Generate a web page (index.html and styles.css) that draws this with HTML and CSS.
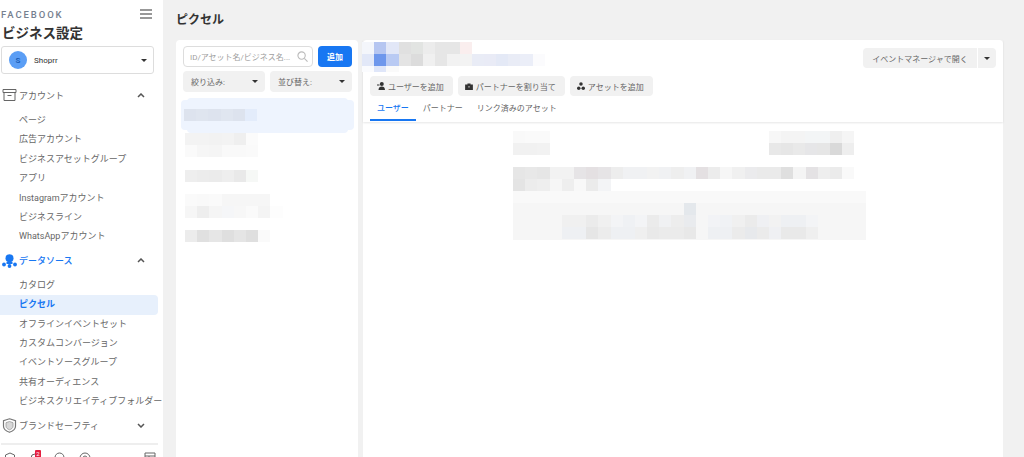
FILE: index.html
```html
<!DOCTYPE html>
<html lang="ja">
<head>
<meta charset="utf-8">
<title>ビジネス設定</title>
<link rel="stylesheet" href="styles.css">
</head>
<body>
<div class="app">
  <aside class="side">
    <div class="brand-row"><span class="brand">FACEBOOK</span>
      <svg class="burger" width="12" height="10" viewBox="0 0 12 10"><path d="M0 1h12M0 5h12M0 9h12" stroke="#777" stroke-width="1.300"/></svg></div>
    <h1 class="title">ビジネス設定</h1>
    <div class="account"><span class="avatar">S</span><span class="acct-name">Shoprr</span><span class="caret"></span></div>
    <div class="sec first"><svg class="sec-ic" width="14" height="12" viewBox="0 0 14 12"><path d="M.5.500h13v3H.5zM1.500 3.500v8h11v-8M5 6.500h4" fill="none" stroke="#666" stroke-width="1"/></svg><span>アカウント</span><svg class="chev" width="8" height="5" viewBox="0 0 8 5"><path d="M1 4l3-3 3 3" fill="none" stroke="#555" stroke-width="1.500"/></svg></div>
    <ul class="menu">
      <li>ページ</li><li>広告アカウント</li><li>ビジネスアセットグループ</li><li>アプリ</li><li>Instagramアカウント</li><li>ビジネスライン</li><li>WhatsAppアカウント</li>
    </ul>
    <div class="sec active"><svg class="sec-ic" width="15" height="14" viewBox="0 0 15 14"><circle cx="7.500" cy="4.200" r="4" fill="#1877f2"/><path d="M4.500 8h6v2h-6z" fill="#1877f2"/><circle cx="2" cy="10.500" r="1.900" fill="#1877f2"/><circle cx="7.500" cy="12" r="1.900" fill="#1877f2"/><circle cx="13" cy="10.500" r="1.900" fill="#1877f2"/></svg><span>データソース</span><svg class="chev" width="8" height="5" viewBox="0 0 8 5"><path d="M1 4l3-3 3 3" fill="none" stroke="#555" stroke-width="1.500"/></svg></div>
    <ul class="menu">
      <li>カタログ</li><li class="cur">ピクセル</li><li>オフラインイベントセット</li><li>カスタムコンバージョン</li><li>イベントソースグループ</li><li>共有オーディエンス</li><li>ビジネスクリエイティブフォルダー</li>
    </ul>
    <div class="sec"><svg class="sec-ic" width="14" height="15" viewBox="0 0 14 15"><path d="M7 .8l6 2v5.500c0 3-3 5-6 6-3-1-6-3-6-6V2.800z" fill="none" stroke="#777" stroke-width="1.200"/><path d="M7 3.500l3.500 1.200v3.600c0 1.700-1.800 2.900-3.500 3.500-1.700-.6-3.500-1.800-3.500-3.500V4.700z" fill="#d8d8d8" stroke="#999" stroke-width=".8"/></svg><span>ブランドセーフティ</span><svg class="chev" width="8" height="5" viewBox="0 0 8 5"><path d="M1 1l3 3 3-3" fill="none" stroke="#555" stroke-width="1.500"/></svg></div>
    <div class="foot">
      <svg width="12" height="12" viewBox="0 0 12 12"><path d="M6 1l4.500 2v4L6 11 1.500 7V3z" fill="none" stroke="#666"/></svg>
      <span class="bell"><svg width="12" height="12" viewBox="0 0 12 12"><path d="M2 10V6a4 4 0 0 1 8 0v4z" fill="none" stroke="#666"/></svg><i class="badge">2</i></span>
      <svg width="12" height="12" viewBox="0 0 12 12"><circle cx="5.500" cy="5.500" r="4.500" fill="none" stroke="#666"/></svg>
      <svg width="12" height="12" viewBox="0 0 12 12"><circle cx="6" cy="6" r="5" fill="none" stroke="#666"/><circle cx="6" cy="6" r="2" fill="none" stroke="#666"/></svg>
      <svg class="foot-last" width="12" height="12" viewBox="0 0 12 12"><path d="M1 1h10v10H1zM1 4h10M5 4v7" fill="none" stroke="#666"/></svg>
    </div>
  </aside>
  <main class="main">
    <h2 class="page-title">ピクセル</h2>
    <div class="cols">
      <section class="list card">
        <div class="search-row">
          <div class="search"><span class="ph">ID/アセット名/ビジネス名...</span><svg width="11" height="11" viewBox="0 0 12 12"><circle cx="5" cy="5" r="4" fill="none" stroke="#bbb" stroke-width="1.200"/><path d="M8 8l3.500 3.500" stroke="#bbb" stroke-width="1.200"/></svg></div>
          <button class="add">追加</button>
        </div>
        <div class="filter-row">
          <div class="filter"><span>絞り込み:</span><span class="caret"></span></div>
          <div class="filter"><span>並び替え:</span><span class="caret"></span></div>
        </div>
        <div class="sel">
          <div class="mos"><i style="background:#dde3ee"></i><i style="background:#dfe5ef"></i><i style="background:#dde3ee"></i><i style="background:#e0e6f0"></i><i style="background:#dde3ee"></i><i style="background:#e3ecfb"></i></div>
        </div>
        <div class="items">
          <div class="item">
            <div class="mos"><i style="background:#f3f3f3"></i><i style="background:#f3f3f3"></i><i style="background:#f2f2f2"></i><i style="background:#f3f3f3"></i><i style="background:#efefef"></i><i style="background:#fbfbfb"></i></div>
            <div class="mos"><i style="background:#fafafa"></i><i style="background:#f6f6f6"></i><i style="background:#f5f5f5"></i><i style="background:#f9f9f9"></i><i style="background:#f9f9f9"></i><i style="background:#fafafa"></i></div>
          </div>
          <div class="item gap1">
            <div class="mos"><i style="background:#eeeeee"></i><i style="background:#ececec"></i><i style="background:#ebebeb"></i><i style="background:#eeeeee"></i><i style="background:#e9e9e9"></i><i style="background:#f6f8f6"></i></div>
          </div>
          <div class="item gap2">
            <div class="mos"><i style="background:#fafafa"></i><i style="background:#f9f9f9"></i><i style="background:#fafafa"></i><i style="background:#f6f6f6"></i><i style="background:#f6f6f6"></i><i style="background:#f6f6f6"></i><i style="background:#f6f6f6"></i></div>
            <div class="mos"><i style="background:#f6f6f6"></i><i style="background:#eeeeee"></i><i style="background:#f5f5f5"></i><i style="background:#f5f6f8"></i><i style="background:#f7f7f7"></i><i style="background:#fafafa"></i><i style="background:#f4f4f4"></i><i style="background:#fdfdfd"></i></div>
          </div>
          <div class="item gap2">
            <div class="mos"><i style="background:#ececec"></i><i style="background:#e0e0e0"></i><i style="background:#e6e6e6"></i><i style="background:#dfdfdf"></i><i style="background:#e5e5e5"></i><i style="background:#dfdfdf"></i><i style="background:#fafafa"></i></div>
          </div>
        </div>
      </section>
      <section class="detail card">
        <div class="head">
          <div class="head-top">
            <div class="blur">
              <div class="mos"><i style="background:#f4f6fb"></i><i style="background:#b6c6f1"></i><i style="background:#e2e7f7"></i><i style="background:#e0e0e0"></i><i style="background:#e2e4e2"></i><i style="background:#ececec"></i><i style="background:#e6e6e6"></i><i style="background:#e6e6e6"></i><i style="background:#faeeee"></i></div>
              <div class="mos"><i style="background:#e2e8f8"></i><i style="background:#6e97ec"></i><i style="background:#b9caf3"></i><i style="background:#e4e4e4"></i><i style="background:#dcdcdc"></i><i style="background:#f0f0f0"></i><i style="background:#e6e6e6"></i><i style="background:#f2f2f2"></i><i style="background:#f3f3f3"></i><i style="background:#e9ecf6"></i><i style="background:#e9ebf6"></i><i style="background:#e4e9f6"></i><i style="background:#e9ecf6"></i><i style="background:#ebeef8"></i><i style="background:#fbfbfd"></i></div>
              <div class="mos short"><i style="background:#fafbfe"></i><i style="background:#dfe6f9"></i><i style="background:#fafafa"></i></div>
            </div>
            <div class="open-group"><button class="open">イベントマネージャで開く</button><button class="open-more"><span class="caret"></span></button></div>
          </div>
          <div class="actions">
            <button class="act"><svg width="8" height="8" viewBox="0 0 8 8"><circle cx="4.800" cy="2" r="2" fill="#333"/><path d="M1.500 8c0-2.500 1.500-3.500 3.300-3.500S8 5.500 8 8zM0 2.500h2.500v1H0z" fill="#333"/></svg>ユーザーを追加</button>
            <button class="act"><svg width="8" height="7" viewBox="0 0 10 9"><path d="M3 2V.5h4V2h3v7H0V2z" fill="#333"/><path d="M4 5h2" stroke="#fff"/></svg>パートナーを割り当て</button>
            <button class="act"><svg width="8" height="8" viewBox="0 0 10 10"><circle cx="5" cy="2.500" r="2.200" fill="#333"/><circle cx="2.200" cy="7.800" r="2.200" fill="#333"/><circle cx="7.800" cy="7.800" r="2.200" fill="#333"/></svg>アセットを追加</button>
          </div>
          <nav class="tabs"><span class="tab on">ユーザー</span><span class="tab">パートナー</span><span class="tab">リンク済みのアセット</span></nav>
        </div>
        <div class="body">
          <div class="top-pair">
            <div class="blk-l">
              <div class="mos"><i style="background:#f9f9f9"></i><i style="background:#fafafa"></i><i style="background:#fafafa"></i></div>
              <div class="mos"><i style="background:#f1f1f1"></i><i style="background:#f1f1f1"></i><i style="background:#f2f2f2"></i></div>
            </div>
            <div class="blk-r">
              <div class="mos"><i style="background:#f7f7f7"></i><i style="background:#f4f4f4"></i><i style="background:#f4f4f4"></i><i style="background:#f3f5f6"></i><i style="background:#f3f5f6"></i><i style="background:#efefef"></i><i style="background:#f5f5f5"></i></div>
              <div class="mos"><i style="background:#e8e8e8"></i><i style="background:#e6e6e6"></i><i style="background:#e9e9e9"></i><i style="background:#e6e6e8"></i><i style="background:#e6e6e6"></i><i style="background:#d9d9d9"></i><i style="background:#eeeeee"></i></div>
            </div>
          </div>
          <div class="para">
            <div class="mos"><i style="background:#e6e6e6"></i><i style="background:#e8e8e8"></i><i style="background:#e6e6e6"></i><i style="background:#f2f2f2"></i><i style="background:#f2f2f2"></i><i style="background:#e6e4e6"></i><i style="background:#e4e0e2"></i><i style="background:#e6e4e6"></i><i style="background:#ededed"></i><i style="background:#f0f1f3"></i><i style="background:#f0f1f3"></i><i style="background:#f2f2f2"></i><i style="background:#f0f1f3"></i><i style="background:#eeeeee"></i><i style="background:#f0f1f3"></i><i style="background:#e4e0e2"></i><i style="background:#ececec"></i><i style="background:#f6f6f6"></i><i style="background:#f0f0f0"></i><i style="background:#ebebed"></i><i style="background:#eaeaea"></i><i style="background:#eaeaea"></i><i style="background:#dfdfdf"></i><i style="background:#f4f4f4"></i><i style="background:#e4e2e4"></i><i style="background:#eeeeee"></i><i style="background:#ebebeb"></i><i style="background:#f9f9f9"></i></div>
            <div class="mos"><i style="background:#e4e4e4"></i><i style="background:#ececec"></i><i style="background:#eeeeee"></i><i style="background:#f6f6f6"></i><i style="background:#eeeeee"></i><i style="background:#f8f8f8"></i><i style="background:#ebebeb"></i><i style="background:#f3f4f6"></i></div>
          </div>
          <div class="notice">
            <div class="mos"><i></i><i></i><i></i><i></i><i></i><i></i><i></i><i></i><i></i><i></i><i></i><i></i><i></i><i></i><i style="background:#e4e8ec"></i></div>
            <div class="mos"><i></i><i></i><i></i><i></i><i style="background:#f0f0f0"></i><i style="background:#f0f0f0"></i><i style="background:#ebebeb"></i><i style="background:#f0f0f0"></i><i style="background:#f3f4f6"></i><i style="background:#eff1f4"></i><i style="background:#f3f4f6"></i><i style="background:#ebebeb"></i><i style="background:#f0f1f3"></i><i style="background:#ededed"></i><i style="background:#e9ebee"></i><i></i><i style="background:#f2f3f6"></i><i style="background:#f0f2f5"></i><i style="background:#f0f0f0"></i><i style="background:#ebebeb"></i><i style="background:#eff0f3"></i><i style="background:#f2f2f2"></i><i style="background:#eef0f3"></i><i style="background:#eef0f3"></i><i style="background:#f3f4f6"></i></div>
            <div class="mos"><i></i><i></i><i></i><i></i><i style="background:#eef0f3"></i><i style="background:#eef0f3"></i><i style="background:#e6e6e6"></i><i style="background:#ececec"></i><i style="background:#eef0f3"></i><i style="background:#eef0f3"></i><i style="background:#efefef"></i><i style="background:#e9e9e9"></i><i style="background:#ebebeb"></i><i style="background:#ebebeb"></i><i style="background:#e8e8e8"></i><i></i><i style="background:#eef0f3"></i><i style="background:#eef0f3"></i><i style="background:#ebebeb"></i><i style="background:#e7e9ec"></i><i style="background:#ebebeb"></i><i style="background:#eff0f3"></i><i style="background:#e9e9e9"></i><i style="background:#e9e9e9"></i><i style="background:#efefef"></i></div>
          </div>
        </div>
      </section>
    </div>
  </main>
</div>
</body>
</html>
```
FILE: styles.css
```css
* { box-sizing: border-box; }
html, body { margin: 0; height: 457px; overflow: hidden; }
body { background: #f1f1f1; font-family: "Roboto", "Liberation Sans", "Noto Sans CJK JP", sans-serif; color: #666; font-size: 9px; }
.app { display: flex; height: 457px; overflow: hidden; }
.side { width: 163px; flex: none; background: #fff; padding: 8px 5px 0 0; overflow: hidden; }
.brand-row { display: flex; align-items: center; justify-content: space-between; padding: 0 6px 0 1px; height: 12px; }
.brand { font-size: 9.500px; letter-spacing: 1.900px; color: #76808f; font-weight: 500; }
.title { margin: 3px 0 0 2px; font-size: 13.500px; font-weight: 700; color: #333; line-height: 20px; }
.account { margin: 3px 0 0 1px; width: 153px; height: 28px; border: 1px solid #ddd; border-radius: 3px; display: flex; align-items: center; padding: 0 6px 0 7px; }
.avatar { width: 18px; height: 18px; border-radius: 50%; background: #5b9ef5; color: #1d5fb8; font-size: 8px; font-weight: 700; display: flex; align-items: center; justify-content: center; }
.acct-name { margin-left: 7px; font-size: 8px; color: #333; flex: 1; }
.caret { width: 0; height: 0; border-left: 3.500px solid transparent; border-right: 3.500px solid transparent; border-top: 3.500px solid #333; flex: none; display: inline-block; }
.sec { display: flex; align-items: center; height: 20px; font-size: 9px; color: #666; padding: 0 13px 0 2px; margin-top: 4px; }
.sec.first { margin-top: 11px; }
.sec.active { color: #1877f2; font-weight: 500; }
.sec span { flex: 1; }
.sec-ic { flex: none; width: 15px; margin-right: 2px; }
.menu { list-style: none; margin: 5px 0 0; padding: 0; }
.sec.first + .menu { margin-top: 6px; }
.menu li { height: 19.400px; line-height: 19px; padding-left: 19px; font-size: 9px; color: #666; white-space: nowrap; border-radius: 0 4px 4px 0; }
.menu li.cur { background: #e7f0fc; color: #1877f2; font-weight: 700; }
.foot { margin: 8px 0 0 1px; border-top: 2px solid #eee; padding: 7px 2px 0 3px; display: flex; gap: 13px; }
.foot svg { flex: none; }
.foot-last { margin-left: auto; }
.bell { position: relative; display: block; height: 12px; width: 12px; }
.badge { position: absolute; top: -2px; left: 6px; width: 6px; height: 8px; background: #e41e3f; color: #fff; font-size: 6px; line-height: 8px; font-style: normal; text-align: center; border-radius: 1px; }
.main { flex: 1; padding: 0 21px 0 13px; min-width: 0; }
.page-title { margin: 11px 0 0; font-size: 12px; line-height: 18px; font-weight: 700; color: #333; }
.cols { display: flex; gap: 5px; margin-top: 11px; }
.card { background: #fff; border-radius: 4px 4px 0 0; height: 420px; }
.list { width: 182px; flex: none; padding: 6px 6px 0 7px; }
.search-row { display: flex; gap: 5px; }
.search { flex: 1; height: 21px; border: 1px solid #ddd; border-radius: 4px; display: flex; align-items: center; padding: 0 4px 0 6px; justify-content: space-between; }
.ph { font-size: 8px; color: #a0a0a0; white-space: nowrap; }
.add { width: 34px; height: 21px; background: #1877f2; color: #fff; border: 0; border-radius: 4px; font: 700 8px "Roboto", "Noto Sans CJK JP", sans-serif; padding: 0; }
.filter-row { display: flex; gap: 5px; margin-top: 4px; }
.filter { flex: 1; height: 21px; background: #f1f1f1; border-radius: 4px; display: flex; align-items: center; justify-content: space-between; padding: 0 7px 0 8px; font-size: 8px; color: #666; }
.sel { margin: 8px -2px 0; height: 30px; background: #eef4fe; border-radius: 4px; position: relative; padding: 9px 3px 0; }
.sel::before { content: ""; position: absolute; left: 6px; right: 6px; top: -2px; bottom: -3px; background: #eef4fe; border-radius: 4px; }
.sel .mos { position: relative; }
.mos { display: flex; height: 12px; }
.mos i { display: block; width: 12.200px; height: 12px; flex: none; }
.items { padding-left: 2px; margin-top: 3px; }
.item.gap1 { margin-top: 13px; }
.item.gap2 { margin-top: 12px; }
.detail { flex: 1; min-width: 0; padding: 0; }
.head { box-shadow: 0 1px 2px rgba(0,0,0,.1); height: 82px; padding: 0 7px; }
.head-top { display: flex; justify-content: space-between; height: 34px; }
.blur { padding-top: 2px; margin-left: -8px; }
.mos.short { height: 6px; }
.mos.short i { height: 6px; }
.open-group { display: flex; gap: 1px; margin-top: 8px; }
.open { height: 20px; width: 114px; border: 0; background: #f1f1f1; border-radius: 4px 0 0 4px; font: 8px "Roboto", "Noto Sans CJK JP", sans-serif; color: #666; padding: 0; }
.open-more { width: 18px; height: 20px; border: 0; background: #f1f1f1; border-radius: 0 4px 4px 0; padding: 0; display: flex; align-items: center; justify-content: center; }
.actions { display: flex; gap: 5px; margin-top: 2px; }
.act { height: 20px; border: 0; background: #f1f1f1; border-radius: 4px; font: 8px "Roboto", "Noto Sans CJK JP", sans-serif; color: #666; padding: 0 9px 0 7px; display: flex; align-items: center; gap: 3px; white-space: nowrap; }
.tabs { display: flex; margin-top: 3px; }
.tab { height: 22px; line-height: 20px; padding: 0 7px; font-size: 8px; color: #666; white-space: nowrap; }
.tab.on { color: #1877f2; font-weight: 500; border-bottom: 2px solid #1877f2; }
.body { padding: 9px 149px 0 150px; }
.top-pair { display: flex; justify-content: space-between; }
.para { margin-top: 12px; }
.notice { width: 353px; height: 49px; padding-top: 12px; background: linear-gradient(#f9f9f9 12px, #f6f6f6 12px); }
```
